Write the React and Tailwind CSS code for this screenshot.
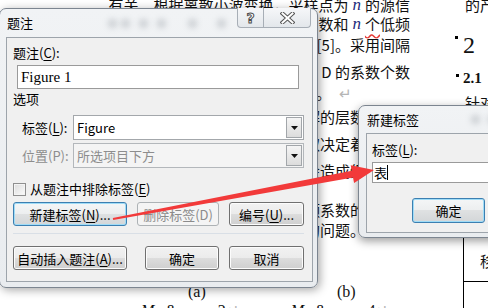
import React from "react";

function N() {
  return (
    <span className="italic font-['Liberation_Serif',serif] text-[17px] text-[#1c2a7a] mx-[4px]">n</span>
  );
}

function Line({ cls, children }) {
  return (
    <div className={"flex items-start justify-end whitespace-nowrap leading-[20px] " + cls}>
      {children}
    </div>
  );
}

function Doc() {
  return (
    <div className="flex text-[15px] text-[#111]">
      <div className="w-[410px] shrink-0 flex flex-col -mt-[5px]">
        <Line cls="h-[19px]">
          有关。根据离散小波变换，采样点为<N />的源信
        </Line>
        <Line cls="h-[21px]">
          得到<N />个高频系数和<N />
          <span className="underline decoration-wavy decoration-[#e53935] underline-offset-[3px]">个</span>低频
        </Line>
        <Line cls="h-[27px]">分解系数，如文献[5]。采用间隔</Line>
        <Line cls="h-[21px]">的长度相同，记为 D 的系数个数</Line>
        <Line cls="h-[24px] pr-[58px]">
          。<span className="ml-[8px] text-[#b5b5b5]">↵</span>
        </Line>
        <Line cls="h-[27px]">影响小波分解的层数不同，</Line>
        <Line cls="h-[27px]">阈值的选取决定着去噪效</Line>
        <Line cls="h-[39px]">选取不当会造成细节信息</Line>
        <Line cls="h-[20px]">高频系数的处理方</Line>
        <Line cls="h-[20px]">的问题。本文采</Line>
        <div className="mt-[42px] h-[20px] flex items-start leading-[20px] pl-[188px] font-['Liberation_Serif',serif] text-[16px]">
          <span className="w-[149px]">(a)</span>
          <span>(b)</span>
        </div>
        <div className="-mt-[1px] h-[20px] flex items-start leading-[20px] pl-[141px] font-['Liberation_Serif',serif] text-[16px] whitespace-nowrap">
          <span className="italic">M</span>
          <span className="text-[12px] mt-[4px] italic">f</span>
          <span className="ml-[8px]">&amp;</span>
          <span className="ml-[4px] italic">m</span>
          <span className="ml-[24px]">2</span>
          <span className="text-[#b5b5b5]">↵</span>
          <span className="ml-[52px] italic">M</span>
          <span className="text-[12px] mt-[4px] italic">f</span>
          <span className="ml-[8px]">&amp;</span>
          <span className="ml-[4px] italic">m</span>
          <span className="ml-[24px]">4</span>
          <span className="text-[#b5b5b5]">↵</span>
        </div>
      </div>
      <div className="ml-[45px] flex-1 flex flex-col -mt-[5px] whitespace-nowrap">
        <div className="h-[38px] pl-[10px] leading-[20px]">的产</div>
        <div className="h-[35px] flex items-start">
          <span className="mt-[3px] w-[3px] h-[3px] bg-black" />
          <span className="ml-[5px] font-['Liberation_Serif',serif] text-[24px] leading-[24px]">2</span>
        </div>
        <div className="h-[25px] flex items-start">
          <span className="mt-[6px] ml-[1px] w-[3px] h-[3px] bg-black" />
          <span className="ml-[4px] font-['Liberation_Serif',serif] font-bold text-[15px] leading-[20px]">2.1</span>
        </div>
        <div className="h-[20px] pl-[10px] leading-[20px]">针对</div>
        <div className="ml-[8px] flex flex-col border-l border-black">
          <div className="h-[169px] flex items-end pb-[10px] pl-[16px] leading-[20px] border-b border-black">移</div>
          <div className="h-[40px]" />
        </div>
      </div>
    </div>
  );
}

function Btn({ kind, children }) {
  const base =
    "w-full h-full flex items-center justify-center rounded-[3px] border text-[13px] leading-none whitespace-nowrap ";
  const styles = {
    normal:
      "border-[#707070] text-black bg-[linear-gradient(to_bottom,#f2f2f2_0%,#ebebeb_50%,#dddddd_50%,#cfcfcf_100%)] shadow-[inset_0_0_0_1px_#fcfcfc]",
    focus:
      "border-[#3c7fb1] text-black bg-[linear-gradient(to_bottom,#f4f6f7_0%,#eceeef_50%,#dfe1e2_50%,#d3d6d8_100%)] shadow-[inset_0_0_0_1px_#9fdcf7]",
    disabled: "border-[#adb2b5] text-[#8b8b8b] bg-[#f4f4f4]",
  };
  return <div className={base + styles[kind || "normal"]}>{children}</div>;
}

function U({ children }) {
  return <span className="underline underline-offset-[2px]">{children}</span>;
}

function Combo({ value, disabled }) {
  return (
    <div
      className={
        "flex-1 h-full flex border " +
        (disabled
          ? "border-[#b3b7bb] bg-[#f4f4f4] text-[#8d8d8d]"
          : "border-[#a3a7ab] bg-white text-black")
      }
    >
      <div className="flex-1 flex items-center pl-[3px] text-[13px]">{value}</div>
      <div className="w-[16px] my-[1px] mr-[1px] border border-[#a2a6aa] bg-[linear-gradient(to_bottom,#f5f5f5,#dcdcdc)] flex items-center justify-center">
        <svg width="7" height="4" viewBox="0 0 7 4">
          <path d="M0 0H7L3.5 4Z" fill="#111" />
        </svg>
      </div>
    </div>
  );
}

function Blob({ cls }) {
  return <span className={"w-[9px] h-[9px] rounded-full bg-[#8d949b] blur-[3px] opacity-40 shrink-0 " + cls} />;
}

function MainDialog() {
  return (
    <div className="absolute left-[-1px] top-[8px] w-[319px] h-[280px] border border-[#7c8590] rounded-[7px] bg-[linear-gradient(to_bottom,#f1f3f5,#e9ecef)] shadow-[2px_2px_10px_rgba(0,0,0,0.35)] flex flex-col text-[13px] text-black">
      <div className="h-[28px] flex items-start">
        <span className="self-center pl-[7px] pb-[1px] leading-none">题注</span>
        <div className="self-center flex items-center">
          <Blob cls="ml-[75px]" />
          <Blob cls="ml-[4px]" />
          <Blob cls="ml-[9px]" />
          <Blob cls="ml-[9px]" />
          <Blob cls="ml-[22px]" />
          <Blob cls="ml-[20px]" />
        </div>
        <div className="ml-auto mr-[6px] -mt-px flex h-[20px]">
          <div className="w-[27px] h-full flex items-center justify-center border border-t-0 border-[#a7aeb6] rounded-bl-[4px] bg-[linear-gradient(to_bottom,#f6f7f9,#e3e7eb)]">
            <span className="font-['DejaVu_Sans',sans-serif] font-bold text-[14px] leading-none text-white [-webkit-text-stroke:1px_#4d4d4d]">?</span>
          </div>
          <div className="w-[47px] h-full flex items-center justify-center border border-t-0 border-l-0 border-[#a7aeb6] rounded-br-[4px] bg-[linear-gradient(to_bottom,#f6f7f9,#e3e7eb)]">
            <svg width="15" height="12" viewBox="0 0 15 12">
              <path d="M2.5 1.5L12.5 10.5M12.5 1.5L2.5 10.5" stroke="#555" strokeWidth="4" strokeLinecap="square" />
              <path d="M2.5 1.5L12.5 10.5M12.5 1.5L2.5 10.5" stroke="#fff" strokeWidth="2" strokeLinecap="square" />
            </svg>
          </div>
        </div>
      </div>
      <div className="ml-[6px] mr-[4px] h-[245px] border border-[#9da4ab] bg-[#f0f0f0] flex flex-col leading-[20px]">
        <div className="mt-[5px] h-[20px] pl-[6px]">
          题注(<U>C</U>):
        </div>
        <div className="mt-[2px] ml-[10px] mr-[13px] h-[24px] border border-[#9a9a9a] bg-white flex items-center pl-[3px] font-['Liberation_Serif',serif] text-[15px]">
          Figure 1
        </div>
        <div className="h-[20px] pl-[6px] pr-[8px] flex items-center">
          <span>选项</span>
        </div>
        <div className="mt-[6px] h-[25px] pl-[15px] pr-[8px] flex items-center">
          <div className="w-[51px]">
            标签(<U>L</U>):
          </div>
          <Combo value="Figure" />
        </div>
        <div className="mt-[3px] h-[25px] pl-[15px] pr-[8px] flex items-center text-[#8d8d8d]">
          <div className="w-[51px]">位置(P):</div>
          <Combo value="所选项目下方" disabled />
        </div>
        <div className="mt-[11px] h-[20px] pl-[6px] flex items-center">
          <span className="w-[13px] h-[13px] border border-[#8f8f8f] bg-[linear-gradient(135deg,#dcdcdc,#fbfbfb)] shadow-[inset_0_0_0_1px_#f4f4f4]" />
          <span className="ml-[4px]">
            从题注中排除标签(<U>E</U>)
          </span>
        </div>
        <div className="mt-[3px] h-[24px] pl-[6px] pr-[8px] flex">
          <div className="w-[114px] h-full">
            <Btn kind="focus">
              新建标签(<U>N</U>)...
            </Btn>
          </div>
          <div className="ml-[10px] w-[82px] h-full">
            <Btn kind="disabled">删除标签(D)</Btn>
          </div>
          <div className="ml-[10px] w-[75px] h-full">
            <Btn>
              编号(<U>U</U>)...
            </Btn>
          </div>
        </div>
        <div className="mt-[7px] ml-[6px] mr-[8px] h-px bg-[#d9dfe6]" />
        <div className="mt-[12px] h-[24px] pl-[6px] pr-[8px] flex">
          <div className="w-[114px] h-full">
            <Btn>
              自动插入题注(<U>A</U>)...
            </Btn>
          </div>
          <div className="ml-[18px] w-[74px] h-full">
            <Btn>确定</Btn>
          </div>
          <div className="ml-[10px] w-[75px] h-full">
            <Btn>取消</Btn>
          </div>
        </div>
      </div>
    </div>
  );
}

function NewLabelDialog() {
  return (
    <div className="absolute left-[358px] top-[105px] w-[170px] h-[133px] border border-[#7c8590] rounded-[7px] bg-[linear-gradient(to_bottom,#f1f3f5,#e9ecef)] shadow-[0_3px_10px_rgba(0,0,0,0.4)] flex flex-col text-[13px] text-black">
      <div className="h-[27px] flex items-center pl-[8px] leading-none">
        <span>新建标签</span>
        <Blob cls="ml-[52px]" />
        <Blob cls="ml-[8px]" />
      </div>
      <div className="ml-[7px] h-[100px] border border-[#9da4ab] bg-[#f0f0f0] flex flex-col leading-[20px]">
        <div className="mt-[6px] h-[20px] pl-[5px]">
          标签(<U>L</U>):
        </div>
        <div className="mt-[2px] ml-[5px] h-[21px] border border-[#9a9a9a] bg-white flex items-center pl-[1px]">
          <span>表</span>
          <span className="w-px h-[15px] bg-black" />
        </div>
        <div className="mt-[15px] ml-[45px] w-[73px] h-[25px]">
          <Btn kind="focus">确定</Btn>
        </div>
      </div>
    </div>
  );
}

function Arrow() {
  return (
    <svg className="absolute left-0 top-0 pointer-events-none" width="488" height="308" viewBox="0 0 488 308">
      <polygon
        points="112.8,218 351.8,170.7 350.7,165.3 374,170 354.1,182.9 353,177.5 113.2,220"
        fill="#f23a3a"
      />
    </svg>
  );
}

export default function App() {
  return (
    <div className="relative w-[488px] h-[308px] overflow-hidden bg-white font-['Noto_Sans_CJK_SC',sans-serif]">
      <Doc />
      <MainDialog />
      <NewLabelDialog />
      <Arrow />
    </div>
  );
}
